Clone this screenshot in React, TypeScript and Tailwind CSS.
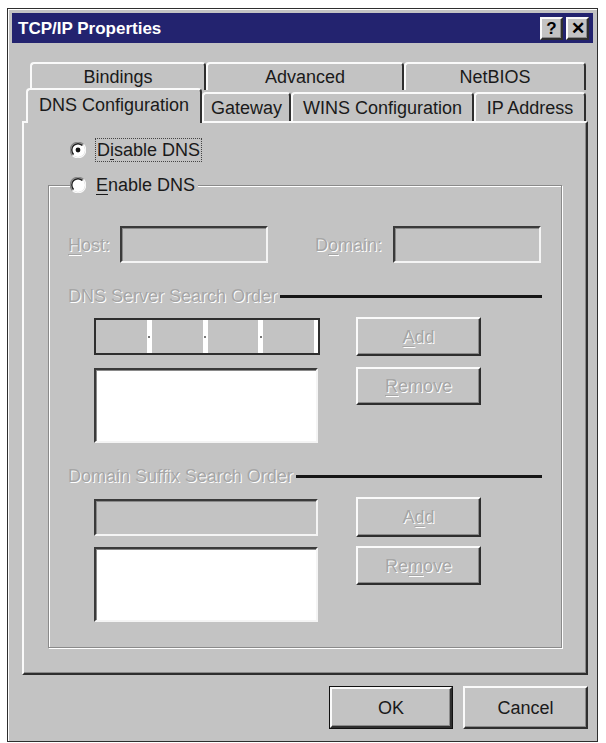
import React from "react";

const raised =
  "border-2 border-t-[#fafafa] border-l-[#fafafa] border-r-[#2e2e2e] border-b-[#2e2e2e] shadow-[inset_-1px_-1px_0_#8a8a8a] bg-[#c3c3c3]";
const sunken =
  "border-2 border-t-[#3a3a3a] border-l-[#3a3a3a] border-r-[#f4f4f4] border-b-[#f4f4f4] shadow-[inset_1px_1px_0_#8a8a8a]";
const disabledText = "text-[#a6a6a6] [text-shadow:1px_1px_0_#ffffff]";

function U({ children }: { children: React.ReactNode }) {
  return <span className="underline underline-offset-[3px]">{children}</span>;
}

function Radio({ checked }: { checked: boolean }) {
  return (
    <svg width="16" height="16" viewBox="0 0 16 16" className="shrink-0">
      <circle cx="8" cy="8" r="7" fill="#ffffff" />
      <path d="M2.5 13.5 A7.5 7.5 0 0 1 13.5 2.5" stroke="#858585" strokeWidth="1.2" fill="none" />
      <path d="M3.6 12.4 A6 6 0 0 1 12.4 3.6" stroke="#1e1e1e" strokeWidth="1.4" fill="none" />
      <path d="M13.5 2.5 A7.5 7.5 0 0 1 2.5 13.5" stroke="#f8f8f8" strokeWidth="1.2" fill="none" />
      {checked && <circle cx="8" cy="8" r="2.4" fill="#111111" />}
    </svg>
  );
}

function TitleButton({ children }: { children: React.ReactNode }) {
  return (
    <div
      className={`${raised} flex h-[23px] w-[23px] items-center justify-center text-[17px] font-bold leading-none text-black`}
    >
      {children}
    </div>
  );
}

function Tab({
  label,
  width,
  selected = false,
}: {
  label: string;
  width: string;
  selected?: boolean;
}) {
  return (
    <div
      className={`${width} ${
        selected ? "relative z-10 -mb-[2px] h-[35px] pb-[3px]" : "h-[29px]"
      } flex items-center justify-center rounded-t-[4px] border-l-2 border-r-2 border-t-2 border-l-[#fafafa] border-r-[#2e2e2e] border-t-[#fafafa] bg-[#c3c3c3] text-[18px] leading-none text-[#1a1a1a]`}
    >
      {label}
    </div>
  );
}

function BackTab({ label, width }: { label: string; width: string }) {
  return (
    <div
      className={`${width} flex h-[28px] items-center justify-center rounded-t-[4px] border-l-2 border-r-2 border-t-2 border-l-[#fafafa] border-r-[#2e2e2e] border-t-[#fafafa] text-[18px] leading-none text-[#1a1a1a]`}
    >
      {label}
    </div>
  );
}

function DisabledButton({
  children,
  height,
}: {
  children: React.ReactNode;
  height: string;
}) {
  return (
    <div
      className={`${raised} ${height} ml-[38px] flex w-[125px] shrink-0 items-center justify-center text-[18px] leading-none ${disabledText}`}
    >
      {children}
    </div>
  );
}

function Heading({ label }: { label: string }) {
  return (
    <div className="flex h-[20px] items-center pl-[19px] pr-[19px]">
      <span className={`text-[18px] leading-none ${disabledText}`}>{label}</span>
      <div className="ml-[3px] h-[3px] flex-1 bg-[#161616]" />
    </div>
  );
}

function IpBox() {
  return (
    <div className="flex h-[37px] w-[226px] shrink-0 border-2 border-[#2e2e2e] bg-[#c3c3c3]">
      {[0, 1, 2].map((i) => (
        <React.Fragment key={i}>
          <div className="flex-1" />
          <div className="flex w-[5px] items-center justify-center bg-white">
            <div className="h-[2px] w-[2px] bg-[#777]" />
          </div>
        </React.Fragment>
      ))}
      <div className="flex-1" />
      <div className="w-[4px] bg-white" />
    </div>
  );
}

export default function App() {
  return (
    <div className="h-[743px] w-[606px] bg-white pl-[7px] pt-[8px] font-['Liberation_Sans',Arial,sans-serif] text-[#111]">
      <div className="flex h-[734px] w-[591px] flex-col border border-[#2e2e2e] bg-[#c3c3c3] p-[4px] shadow-[inset_1px_1px_0_#ffffff]">
        {/* title bar */}
        <div className="flex h-[30px] items-center justify-between bg-[#23236f] pl-[6px] pr-[4px]">
          <span className="text-[17px] font-bold leading-none text-white">
            TCP/IP Properties
          </span>
          <div className="flex gap-[3px]">
            <TitleButton>?</TitleButton>
            <TitleButton>✕</TitleButton>
          </div>
        </div>

        {/* tabs */}
        <div className="ml-[10px] mt-[19px] w-[566px]">
          <div className="flex pl-[8px]">
            <BackTab label="Bindings" width="w-[176px]" />
            <BackTab label="Advanced" width="w-[198px]" />
            <BackTab label="NetBIOS" width="w-[182px]" />
          </div>
          <div className="-mt-[2px] flex h-[33px] items-end pl-[4px]">
            <Tab label="DNS Configuration" width="w-[176px]" selected />
            <Tab label="Gateway" width="w-[89px]" />
            <Tab label="WINS Configuration" width="w-[183px]" />
            <Tab label="IP Address" width="w-[112px]" />
          </div>
        </div>

        {/* panel */}
        <div className="ml-[10px] h-[554px] w-[566px] border-2 border-b-[#2e2e2e] border-l-[#fafafa] border-r-[#2e2e2e] border-t-[#fafafa] shadow-[inset_-1px_-1px_0_#8a8a8a]">
          <div className="mt-[15px] flex h-[24px] items-center pl-[46px]">
            <Radio checked />
            <span className="ml-[9px] border border-dotted border-[#444] px-[1px] py-[2px] text-[18px] leading-none text-[#1a1a1a]">
              D<U>i</U>sable DNS
            </span>
          </div>

          <fieldset className="mx-[24px] mt-[11px] border border-[#8a8a8a] pb-[25px] shadow-[inset_1px_1px_0_#ffffff,1px_1px_0_#ffffff]">
            <legend className="ml-[21px] flex h-[24px] items-center bg-[#c3c3c3] pr-[3px]">
              <Radio checked={false} />
              <span className="ml-[10px] text-[18px] leading-none text-[#1a1a1a]">
                <U>E</U>nable DNS
              </span>
            </legend>

            <div className="mt-[29px] flex h-[37px] items-center pl-[19px]">
              <span className={`w-[52px] text-[18px] leading-none ${disabledText}`}>
                <U>H</U>ost:
              </span>
              <div className={`${sunken} h-[37px] w-[148px]`} />
              <span className={`ml-[47px] w-[78px] text-[18px] leading-none ${disabledText}`}>
                D<U>o</U>main:
              </span>
              <div className={`${sunken} h-[37px] w-[148px]`} />
            </div>

            <div className="mt-[23px]">
              <Heading label="DNS Server Search Order" />
            </div>
            <div className="pl-[45px]">
              <div className="mt-[11px] flex h-[39px] items-center">
                <IpBox />
                <div className="-ml-[2px]">
                  <DisabledButton height="h-[39px]">
                    <U>A</U>dd
                  </DisabledButton>
                </div>
              </div>
              <div className="mt-[11px] flex items-start">
                <div className={`${sunken} mt-[1px] h-[75px] w-[224px] bg-white`} />
                <DisabledButton height="h-[38px]">
                  <U>R</U>emove
                </DisabledButton>
              </div>
            </div>

            <div className="mt-[23px]">
              <Heading label="Domain Suffix Search Order" />
            </div>
            <div className="pl-[45px]">
              <div className="mt-[11px] flex h-[40px] items-center">
                <div className={`${sunken} h-[37px] w-[224px]`} />
                <DisabledButton height="h-[40px]">
                  A<U>d</U>d
                </DisabledButton>
              </div>
              <div className="mt-[9px] flex items-start">
                <div className={`${sunken} mt-[1px] h-[75px] w-[224px] bg-white`} />
                <DisabledButton height="h-[39px]">
                  Re<U>m</U>ove
                </DisabledButton>
              </div>
            </div>
          </fieldset>
        </div>

        {/* footer buttons */}
        <div className="mt-[11px] flex justify-end gap-[10px] pr-[5px]">
          <div className="flex h-[43px] w-[124px] items-center justify-center border border-[#111] text-[18px] leading-none text-[#1a1a1a]">
            <div className={`${raised} flex h-full w-full items-center justify-center`}>OK</div>
          </div>
          <div
            className={`${raised} flex h-[43px] w-[125px] items-center justify-center text-[18px] leading-none text-[#1a1a1a]`}
          >
            Cancel
          </div>
        </div>
      </div>
    </div>
  );
}
